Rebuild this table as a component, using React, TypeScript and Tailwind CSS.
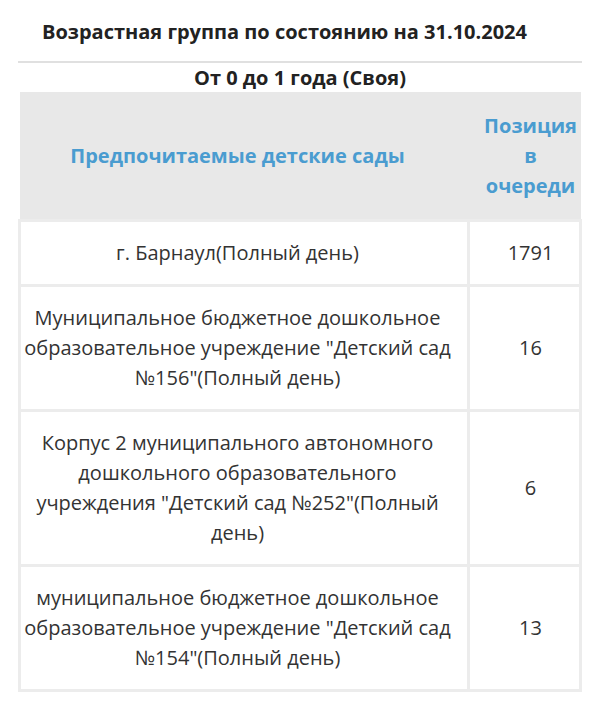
const rows = [
  { name: "г. Барнаул(Полный день)", pos: "1791" },
  {
    name: 'Муниципальное бюджетное дошкольное образовательное учреждение "Детский сад №156"(Полный день)',
    pos: "16",
  },
  {
    name: 'Корпус 2 муниципального автономного дошкольного образовательного учреждения "Детский сад №252"(Полный день)',
    pos: "6",
  },
  {
    name: 'муниципальное бюджетное дошкольное образовательное учреждение "Детский сад №154"(Полный день)',
    pos: "13",
  },
]

export default function App() {
  return (
    <main className="min-h-screen bg-white font-['Open_Sans',sans-serif] text-[#333]">
      <div className="px-[18px] pt-[19px]">
        <h2 className="pl-6 text-[20px] font-bold leading-[26px] text-[#222]">
          Возрастная группа по состоянию на 31.10.2024
        </h2>

        <div className="mt-[16px] border-t-2 border-[#e0e0e0]">
          <h3 className="text-center text-[20px] font-bold leading-[29px] text-[#222]">От 0 до 1 года (Своя)</h3>

          <table className="w-full border-collapse text-center text-[20px] leading-[30px]">
            <thead>
              <tr className="bg-[#e8e8e8] text-[#4a9cd0]">
                <th className="pb-[18px] pl-[3px] pr-[16px] pt-[19px] font-bold leading-[30.5px]">
                  Предпочитаемые детские сады
                </th>
                <th className="w-[112px] pb-[18px] pl-[15px] pr-[3px] pt-[19px] font-bold leading-[30px]">
                  Позиция
                  <br />в<br />
                  очереди
                </th>
              </tr>
            </thead>
            <tbody>
              {rows.map((r) => (
                <tr key={r.pos}>
                  <td className="border-[3px] border-[#ececec] py-[16px] pl-[3px] pr-[16px]">{r.name}</td>
                  <td className="border-[3px] border-[#ececec] py-[16px] pl-[15px] pr-[3px]">{r.pos}</td>
                </tr>
              ))}
            </tbody>
          </table>
        </div>
      </div>
    </main>
  )
}
